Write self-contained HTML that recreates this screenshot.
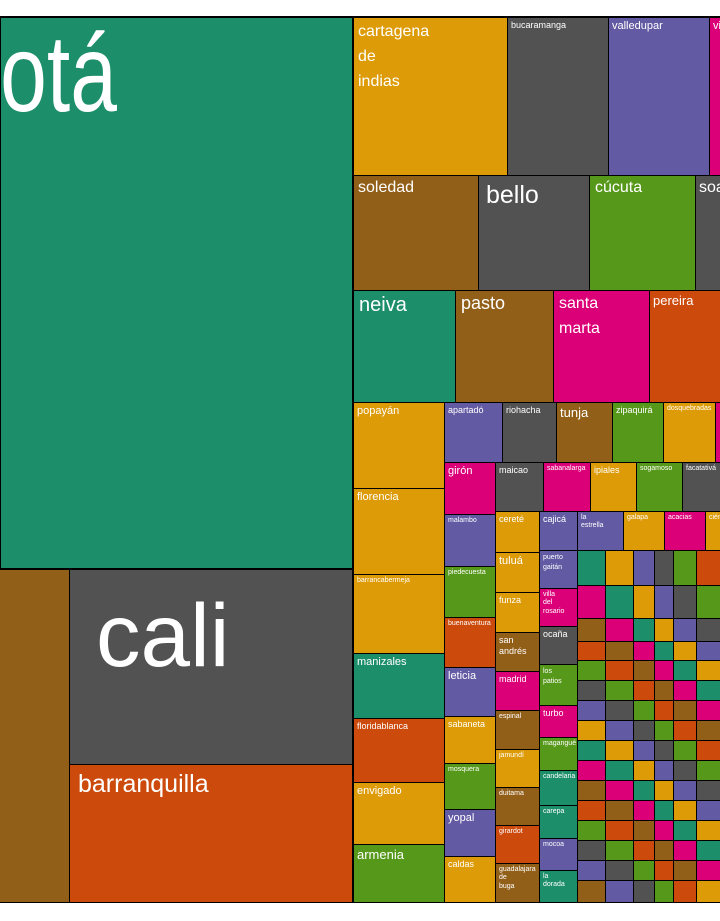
<!DOCTYPE html>
<html><head><meta charset="utf-8"><style>
body{margin:0;width:720px;height:921px;background:#fff;position:relative;overflow:hidden;font-family:"Liberation Sans",sans-serif}
#m{position:absolute;left:0;top:16px;width:720px;height:887px;background:#000}
.t{position:absolute;box-shadow:inset 0 0 0 1px #000;color:#fff;overflow:hidden;box-sizing:border-box;padding:3px 4px;line-height:1.2;white-space:nowrap}
.g{background:#1c8e69}.o{background:#cc4a0c}.p{background:#625aa3}.k{background:#dc0078}
.l{background:#56981a}.y{background:#dd9b07}.b{background:#925f19}.d{background:#525252}
.f7{font-size:7px}.f9{font-size:9px}.f11{font-size:11px}.f13{font-size:13px}.f16{font-size:16px}.f20{font-size:20px}
</style></head><body>
<div id="m"></div>
<div class="t g" style="left:0;top:17px;width:353px;height:552px;padding:0"><span style="position:absolute;left:-140px;top:22px;font-size:84px;transform:scaleY(1.3);transform-origin:0 80%;line-height:1">bogotá</span></div>
<div class="t b" style="left:-2px;top:569px;width:72px;height:334px"></div>
<div class="t d" style="left:69px;top:569px;width:284px;height:196px;padding:0"><span style="position:absolute;left:27px;top:22px;font-size:89px;line-height:1">cali</span></div>
<div class="t o f20" style="left:69px;top:764px;width:284px;height:139px;padding:5px 9px;font-size:25px">barranquilla</div>

<div class="t y" style="left:353px;top:17px;width:155px;height:159px;font-size:16px;line-height:25px;padding:2px 5px">cartagena<br>de<br>indias</div>
<div class="t d f9" style="left:507px;top:17px;width:102px;height:159px">bucaramanga</div>
<div class="t p f11" style="left:608px;top:17px;width:102px;height:159px">valledupar</div>
<div class="t k f11" style="left:709px;top:17px;width:15px;height:159px">vi</div>
<div class="t b f16" style="left:353px;top:175px;width:126px;height:116px;padding:3px 5px">soledad</div>
<div class="t d" style="left:478px;top:175px;width:112px;height:116px;font-size:25px;padding:5px 8px">bello</div>
<div class="t l f16" style="left:589px;top:175px;width:107px;height:116px;padding:3px 6px">cúcuta</div>
<div class="t d f16" style="left:695px;top:175px;width:30px;height:116px">soacha</div>
<div class="t g" style="left:353px;top:290px;width:103px;height:113px;font-size:20px;padding:3px 6px">neiva</div>
<div class="t b f16" style="left:455px;top:290px;width:99px;height:113px;font-size:18px;padding:3px 6px">pasto</div>
<div class="t k" style="left:553px;top:290px;width:97px;height:113px;font-size:16px;line-height:25px;padding:1px 6px">santa<br>marta</div>
<div class="t o f13" style="left:649px;top:290px;width:75px;height:113px">pereira</div>

<div class="t y f11" style="left:353px;top:402px;width:92px;height:87px">popayán</div>
<div class="t y f11" style="left:353px;top:488px;width:92px;height:87px">florencia</div>
<div class="t y f7" style="left:353px;top:574px;width:92px;height:80px">barrancabermeja</div>
<div class="t g f11" style="left:353px;top:653px;width:92px;height:66px">manizales</div>
<div class="t o f9" style="left:353px;top:718px;width:92px;height:65px">floridablanca</div>
<div class="t y f11" style="left:353px;top:782px;width:92px;height:63px">envigado</div>
<div class="t l f13" style="left:353px;top:844px;width:92px;height:59px">armenia</div>

<div class="t p f9" style="left:444px;top:402px;width:59px;height:61px">apartadó</div>
<div class="t d f9" style="left:502px;top:402px;width:55px;height:61px">riohacha</div>
<div class="t b f13" style="left:556px;top:402px;width:57px;height:61px">tunja</div>
<div class="t l f9" style="left:612px;top:402px;width:52px;height:61px">zipaquirá</div>
<div class="t y f7" style="left:663px;top:402px;width:53px;height:61px">dosquebradas</div>
<div class="t k" style="left:715px;top:402px;width:10px;height:61px"></div>

<div class="t k f11" style="left:444px;top:462px;width:52px;height:53px">girón</div>
<div class="t p f7" style="left:444px;top:514px;width:52px;height:53px">malambo</div>
<div class="t l f7" style="left:444px;top:566px;width:52px;height:52px">piedecuesta</div>
<div class="t o f7" style="left:444px;top:617px;width:52px;height:51px">buenaventura</div>
<div class="t p f11" style="left:444px;top:667px;width:52px;height:50px">leticia</div>
<div class="t y f9" style="left:444px;top:716px;width:52px;height:48px">sabaneta</div>
<div class="t l f7" style="left:444px;top:763px;width:52px;height:47px">mosquera</div>
<div class="t p f11" style="left:444px;top:809px;width:52px;height:48px">yopal</div>
<div class="t y f9" style="left:444px;top:856px;width:52px;height:47px">caldas</div>

<div class="t d f9" style="left:495px;top:462px;width:49px;height:50px">maicao</div>
<div class="t k f7" style="left:543px;top:462px;width:48px;height:50px">sabanalarga</div>
<div class="t y f9" style="left:590px;top:462px;width:47px;height:50px">ipiales</div>
<div class="t l f7" style="left:636px;top:462px;width:47px;height:50px">sogamoso</div>
<div class="t d f7" style="left:682px;top:462px;width:42px;height:50px">facatativá</div>

<div class="t y f9" style="left:495px;top:511px;width:45px;height:42px">cereté</div>
<div class="t y f11" style="left:495px;top:552px;width:45px;height:41px">tuluá</div>
<div class="t y f9" style="left:495px;top:592px;width:45px;height:41px">funza</div>
<div class="t b f9" style="left:495px;top:632px;width:45px;height:40px;line-height:11px">san<br>andrés</div>
<div class="t k f9" style="left:495px;top:671px;width:45px;height:40px">madrid</div>
<div class="t b f7" style="left:495px;top:710px;width:45px;height:40px">espinal</div>
<div class="t y f7" style="left:495px;top:749px;width:45px;height:39px">jamundí</div>
<div class="t b f7" style="left:495px;top:787px;width:45px;height:39px">duitama</div>
<div class="t o f7" style="left:495px;top:825px;width:45px;height:39px">girardot</div>
<div class="t b f7" style="left:495px;top:863px;width:45px;height:40px">guadalajara<br>de<br>buga</div>

<div class="t p f9" style="left:539px;top:511px;width:39px;height:40px">cajicá</div>
<div class="t p f7" style="left:539px;top:550px;width:39px;height:39px;line-height:10px">puerto<br>gaitán</div>
<div class="t k f7" style="left:539px;top:588px;width:39px;height:39px">villa<br>del<br>rosario</div>
<div class="t d f9" style="left:539px;top:626px;width:39px;height:39px">ocaña</div>
<div class="t l f7" style="left:539px;top:664px;width:39px;height:42px;line-height:10px">los<br>patios</div>
<div class="t k f9" style="left:539px;top:705px;width:39px;height:33px">turbo</div>
<div class="t l f7" style="left:539px;top:737px;width:39px;height:34px">magangué</div>
<div class="t g f7" style="left:539px;top:770px;width:39px;height:36px">candelaria</div>
<div class="t g f7" style="left:539px;top:805px;width:39px;height:34px">carepa</div>
<div class="t p f7" style="left:539px;top:838px;width:39px;height:33px">mocoa</div>
<div class="t g f7" style="left:539px;top:870px;width:39px;height:33px">la<br>dorada</div>

<div class="t p f7" style="left:577px;top:511px;width:47px;height:40px">la<br>estrella</div>
<div class="t y f7" style="left:623px;top:511px;width:42px;height:40px">galapa</div>
<div class="t k f7" style="left:664px;top:511px;width:42px;height:40px">acacias</div>
<div class="t y f7" style="left:705px;top:511px;width:20px;height:40px">ciénaga</div>

<div class="t g" style="left:577px;top:550px;width:29px;height:36px"></div><div class="t y" style="left:605px;top:550px;width:29px;height:36px"></div><div class="t p" style="left:633px;top:550px;width:22px;height:36px"></div><div class="t d" style="left:654px;top:550px;width:20px;height:36px"></div><div class="t l" style="left:673px;top:550px;width:24px;height:36px"></div><div class="t o" style="left:696px;top:550px;width:28px;height:36px"></div>
<div class="t k" style="left:577px;top:585px;width:29px;height:34px"></div><div class="t g" style="left:605px;top:585px;width:29px;height:34px"></div><div class="t y" style="left:633px;top:585px;width:22px;height:34px"></div><div class="t p" style="left:654px;top:585px;width:20px;height:34px"></div><div class="t d" style="left:673px;top:585px;width:24px;height:34px"></div><div class="t l" style="left:696px;top:585px;width:28px;height:34px"></div>
<div class="t b" style="left:577px;top:618px;width:29px;height:24px"></div><div class="t k" style="left:605px;top:618px;width:29px;height:24px"></div><div class="t g" style="left:633px;top:618px;width:22px;height:24px"></div><div class="t y" style="left:654px;top:618px;width:20px;height:24px"></div><div class="t p" style="left:673px;top:618px;width:24px;height:24px"></div><div class="t d" style="left:696px;top:618px;width:28px;height:24px"></div>
<div class="t o" style="left:577px;top:641px;width:29px;height:20px"></div><div class="t b" style="left:605px;top:641px;width:29px;height:20px"></div><div class="t k" style="left:633px;top:641px;width:22px;height:20px"></div><div class="t g" style="left:654px;top:641px;width:20px;height:20px"></div><div class="t y" style="left:673px;top:641px;width:24px;height:20px"></div><div class="t p" style="left:696px;top:641px;width:28px;height:20px"></div>
<div class="t l" style="left:577px;top:660px;width:29px;height:21px"></div><div class="t o" style="left:605px;top:660px;width:29px;height:21px"></div><div class="t b" style="left:633px;top:660px;width:22px;height:21px"></div><div class="t k" style="left:654px;top:660px;width:20px;height:21px"></div><div class="t g" style="left:673px;top:660px;width:24px;height:21px"></div><div class="t y" style="left:696px;top:660px;width:28px;height:21px"></div>
<div class="t d" style="left:577px;top:680px;width:29px;height:21px"></div><div class="t l" style="left:605px;top:680px;width:29px;height:21px"></div><div class="t o" style="left:633px;top:680px;width:22px;height:21px"></div><div class="t b" style="left:654px;top:680px;width:20px;height:21px"></div><div class="t k" style="left:673px;top:680px;width:24px;height:21px"></div><div class="t g" style="left:696px;top:680px;width:28px;height:21px"></div>
<div class="t p" style="left:577px;top:700px;width:29px;height:21px"></div><div class="t d" style="left:605px;top:700px;width:29px;height:21px"></div><div class="t l" style="left:633px;top:700px;width:22px;height:21px"></div><div class="t o" style="left:654px;top:700px;width:20px;height:21px"></div><div class="t b" style="left:673px;top:700px;width:24px;height:21px"></div><div class="t k" style="left:696px;top:700px;width:28px;height:21px"></div>
<div class="t y" style="left:577px;top:720px;width:29px;height:21px"></div><div class="t p" style="left:605px;top:720px;width:29px;height:21px"></div><div class="t d" style="left:633px;top:720px;width:22px;height:21px"></div><div class="t l" style="left:654px;top:720px;width:20px;height:21px"></div><div class="t o" style="left:673px;top:720px;width:24px;height:21px"></div><div class="t b" style="left:696px;top:720px;width:28px;height:21px"></div>
<div class="t g" style="left:577px;top:740px;width:29px;height:21px"></div><div class="t y" style="left:605px;top:740px;width:29px;height:21px"></div><div class="t p" style="left:633px;top:740px;width:22px;height:21px"></div><div class="t d" style="left:654px;top:740px;width:20px;height:21px"></div><div class="t l" style="left:673px;top:740px;width:24px;height:21px"></div><div class="t o" style="left:696px;top:740px;width:28px;height:21px"></div>
<div class="t k" style="left:577px;top:760px;width:29px;height:21px"></div><div class="t g" style="left:605px;top:760px;width:29px;height:21px"></div><div class="t y" style="left:633px;top:760px;width:22px;height:21px"></div><div class="t p" style="left:654px;top:760px;width:20px;height:21px"></div><div class="t d" style="left:673px;top:760px;width:24px;height:21px"></div><div class="t l" style="left:696px;top:760px;width:28px;height:21px"></div>
<div class="t b" style="left:577px;top:780px;width:29px;height:21px"></div><div class="t k" style="left:605px;top:780px;width:29px;height:21px"></div><div class="t g" style="left:633px;top:780px;width:22px;height:21px"></div><div class="t y" style="left:654px;top:780px;width:20px;height:21px"></div><div class="t p" style="left:673px;top:780px;width:24px;height:21px"></div><div class="t d" style="left:696px;top:780px;width:28px;height:21px"></div>
<div class="t o" style="left:577px;top:800px;width:29px;height:21px"></div><div class="t b" style="left:605px;top:800px;width:29px;height:21px"></div><div class="t k" style="left:633px;top:800px;width:22px;height:21px"></div><div class="t g" style="left:654px;top:800px;width:20px;height:21px"></div><div class="t y" style="left:673px;top:800px;width:24px;height:21px"></div><div class="t p" style="left:696px;top:800px;width:28px;height:21px"></div>
<div class="t l" style="left:577px;top:820px;width:29px;height:21px"></div><div class="t o" style="left:605px;top:820px;width:29px;height:21px"></div><div class="t b" style="left:633px;top:820px;width:22px;height:21px"></div><div class="t k" style="left:654px;top:820px;width:20px;height:21px"></div><div class="t g" style="left:673px;top:820px;width:24px;height:21px"></div><div class="t y" style="left:696px;top:820px;width:28px;height:21px"></div>
<div class="t d" style="left:577px;top:840px;width:29px;height:21px"></div><div class="t l" style="left:605px;top:840px;width:29px;height:21px"></div><div class="t o" style="left:633px;top:840px;width:22px;height:21px"></div><div class="t b" style="left:654px;top:840px;width:20px;height:21px"></div><div class="t k" style="left:673px;top:840px;width:24px;height:21px"></div><div class="t g" style="left:696px;top:840px;width:28px;height:21px"></div>
<div class="t p" style="left:577px;top:860px;width:29px;height:21px"></div><div class="t d" style="left:605px;top:860px;width:29px;height:21px"></div><div class="t l" style="left:633px;top:860px;width:22px;height:21px"></div><div class="t o" style="left:654px;top:860px;width:20px;height:21px"></div><div class="t b" style="left:673px;top:860px;width:24px;height:21px"></div><div class="t k" style="left:696px;top:860px;width:28px;height:21px"></div>
<div class="t b" style="left:577px;top:880px;width:29px;height:23px"></div><div class="t p" style="left:605px;top:880px;width:29px;height:23px"></div><div class="t d" style="left:633px;top:880px;width:22px;height:23px"></div><div class="t l" style="left:654px;top:880px;width:20px;height:23px"></div><div class="t o" style="left:673px;top:880px;width:24px;height:23px"></div><div class="t y" style="left:696px;top:880px;width:28px;height:23px"></div>
<div style="position:absolute;left:0;top:903px;width:720px;height:18px;background:#fff"></div>
</body></html>
